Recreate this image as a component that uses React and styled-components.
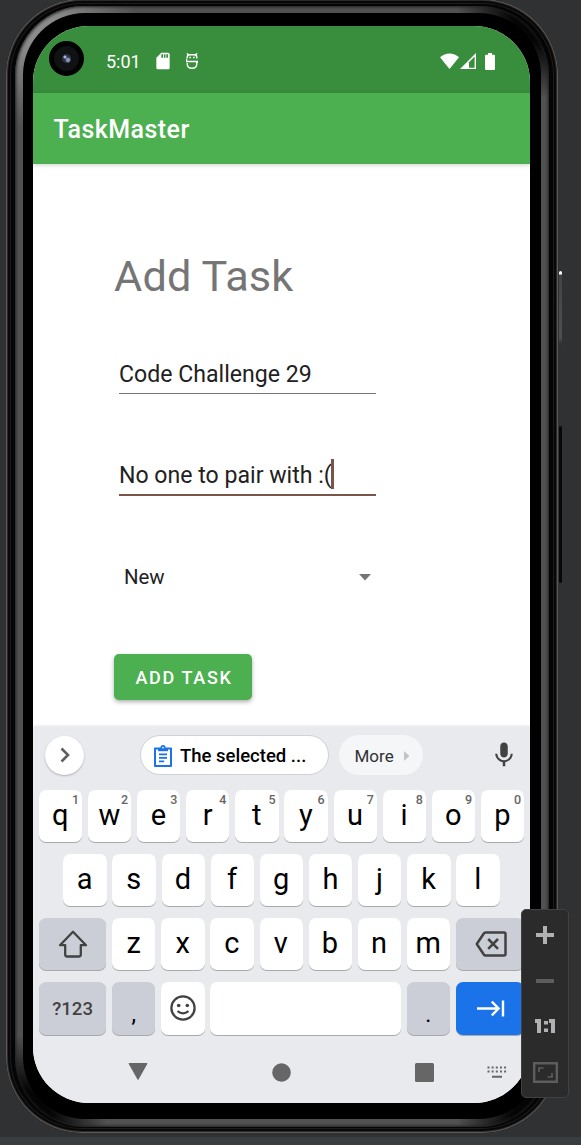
import React from 'react';
import styled, { createGlobalStyle } from 'styled-components';
import { MdSdCard, MdMic } from 'react-icons/md';

const GlobalStyle = createGlobalStyle`
  * { box-sizing: border-box; }
  body { margin: 0; background: #303133; overflow: hidden; font-family: Roboto, "Noto Sans", sans-serif; }
  button { font-family: inherit; border: 0; padding: 0; }
  svg { display: block; flex: none; }
`;

const Desktop = styled.div`
  position: relative;
  width: 581px;
  height: 1145px;
  overflow: hidden;
  padding-left: 6px;
  border-bottom: 8px solid #3a3d40;
  background: #303133;
`;

const Shell = styled.div`
  width: 552px;
  height: 1134px;
  margin-top: -1px;
  padding: 7px 9px 6px;
  border-radius: 76px;
  background: #050505;
  box-shadow: inset 0 0 0 1px #5b5855, inset 0 0 0 2px #2b2928, inset 0 0 0 4px #080808, inset 0 0 0 5px #1c1c1c;
`;

const Ring = styled.div`
  height: 1121px;
  padding: 7px 8px 8px;
  border-radius: 69px;
  background:
    radial-gradient(circle at 100% 0, #050505 38px, transparent 92px),
    radial-gradient(circle at 0 100%, #050505 38px, transparent 92px),
    radial-gradient(circle at 100% 100%, #050505 38px, transparent 92px),
    radial-gradient(circle at 0 0, #8b8b8b 40px, transparent 120px),
    #515151;
  box-shadow: inset 0 0 3px 1px #202020;
`;

const Bezel = styled.div`
  height: 1106px;
  padding: 13px 11px 16px 10px;
  border-radius: 62px;
  background: #000;
`;

const Screen = styled.div`
  height: 1077px;
  display: flex;
  flex-direction: column;
  overflow: hidden;
  border-radius: 56px;
  background: #fff;
`;

const StatusBar = styled.div`
  height: 67px;
  display: flex;
  align-items: center;
  padding: 3px 35px 0 16px;
  background: #388e3c;
  color: #fff;
`;

const Camera = styled.div`
  width: 35px;
  height: 35px;
  margin-top: -6px;
  border: 5px solid #000;
  border-radius: 50%;
  background: radial-gradient(circle at 11px 11px, #aab4d8 0 1px, transparent 2px),
    radial-gradient(circle at 14px 14px, #8793bd 0 1.5px, transparent 3px),
    radial-gradient(circle at 50% 50%, #293142 0 4px, #101112 5px);
`;

const Clock = styled.span`
  width: 51px;
  margin: 0 0 0 22px;
  font-size: 18px;
`;

const StatusGroup = styled.div`
  display: flex;
  align-items: center;
  gap: ${({ $gap }) => $gap}px;
  margin-left: ${({ $push }) => ($push ? 'auto' : '-4px')};
`;

const AppBar = styled.header`
  position: relative;
  height: 71px;
  display: flex;
  align-items: center;
  padding: 2px 20.5px 0;
  background: #4caf50;
  box-shadow: 0 1px 4px rgba(0, 0, 0, 0.2);
  color: #fff;
  font-size: 25px;
  font-weight: 500;
  letter-spacing: 0.45px;
`;

const Form = styled.main`
  height: 563px;
  display: flex;
  flex-direction: column;
  align-items: flex-start;
  padding: 87px 0 0 81px;
`;

const Title = styled.h1`
  height: 52px;
  margin: 0;
  color: #757575;
  font-size: 43.3px;
  font-weight: 400;
  line-height: 52px;
  letter-spacing: 0.15px;
`;

const Field = styled.div`
  width: 257px;
  height: 40px;
  display: flex;
  align-items: center;
  margin: ${({ $top }) => $top}px 0 0 5px;
  padding-top: ${({ $focused }) => ($focused ? 0 : 1)}px;
  border-bottom: ${({ $focused }) => ($focused ? '2px solid #795548' : '1px solid #777')};
  color: #212121;
  font-size: 23.1px;
  white-space: nowrap;
`;

const Caret = styled.span`
  width: 2.5px;
  height: 30px;
  margin: -3px 0 0 -0.5px;
  background: #795548;
`;

const Select = styled.div`
  width: 247px;
  height: 30px;
  margin: 66px 0 0 10px;
  display: flex;
  align-items: center;
  justify-content: space-between;
  color: #212121;
  font-size: 20.4px;
`;

const SubmitButton = styled.button`
  width: 138px;
  height: 46px;
  margin-top: 62px;
  padding: 1px 0 0 2px;
  border-radius: 5px;
  background: #4caf50;
  box-shadow: 0 2px 4px rgba(0, 0, 0, 0.32);
  color: #fff;
  font-size: 18px;
  font-weight: 500;
  letter-spacing: 1.65px;
  white-space: nowrap;
`;

const Keyboard = styled.section`
  height: 376px;
  background: #e8eaed;
  box-shadow: 0 -1px 3px rgba(0, 0, 0, 0.12);
`;

const Suggestions = styled.div`
  height: 63px;
  display: flex;
  align-items: center;
  padding: 0 14px 7px 12px;
`;

const Expand = styled.button`
  width: 39px;
  height: 39px;
  display: flex;
  align-items: center;
  justify-content: center;
  padding-left: 1px;
  border-radius: 50%;
  background: #fff;
  box-shadow: 0 1px 2px rgba(0, 0, 0, 0.25);
`;

const ClipChip = styled.button`
  width: 189px;
  height: 40px;
  display: flex;
  align-items: center;
  gap: 8.5px;
  margin-left: 56px;
  padding: 1px 0 0 12.5px;
  border: 1px solid #d0d1d5;
  border-radius: 20px;
  background: #fff;
  color: #000;
  font-size: 18.5px;
  font-weight: 500;
  white-space: nowrap;
`;

const MoreChip = styled.button`
  width: 84px;
  height: 40px;
  display: flex;
  align-items: center;
  gap: 10px;
  margin: 0 auto 0 10px;
  padding: 1px 0 0 15.5px;
  border-radius: 20px;
  background: #f5f6f8;
  color: #303134;
  font-size: 17px;
`;

const Microphone = styled(MdMic)`
  margin-right: -3px;
`;

const Keys = styled.div`
  display: flex;
  flex-direction: column;
  gap: 12.3px;
  padding: 0 5.8px;
`;

const KeyRow = styled.div`
  height: ${({ $tall }) => ($tall ? 53 : 51.7)}px;
  display: flex;
  gap: 5.9px;
  padding: 0 ${({ $inset }) => $inset || 0}px;
`;

const LABEL_SIZE = { letter: 29, symbol: 18.6, mark: 23, icon: 16 };
const LABEL_PADDING = { letter: '0 0.5px 1px 0', symbol: '1px 0 0', mark: '12px 0 0', icon: '0 0 0 1px' };

const Key = styled.button`
  position: relative;
  flex: ${({ $width }) => ($width ? `0 0 ${$width}px` : '1 1 0')};
  display: flex;
  align-items: center;
  justify-content: center;
  padding: ${({ $kind = 'letter' }) => LABEL_PADDING[$kind]};
  border-radius: 7px;
  background: ${({ $tone }) => ({ dark: '#cbced6', blue: '#1a73e8' }[$tone] || '#fff')};
  box-shadow: 0 1px 0 rgba(0, 0, 0, 0.28);
  color: ${({ $kind }) => ($kind === 'symbol' ? '#424242' : '#000')};
  font-size: ${({ $kind = 'letter' }) => LABEL_SIZE[$kind]}px;
  font-weight: ${({ $kind }) => ($kind === 'symbol' ? 500 : 400)};
`;

const Hint = styled.span`
  position: absolute;
  top: 3px;
  right: 3px;
  color: #666;
  font-size: 12.5px;
  font-weight: 500;
  line-height: 14px;
`;

const NavBar = styled.nav`
  display: flex;
  align-items: center;
  padding: 28px 24px 0 95px;
`;

const NavGap = styled.span`
  flex: 0 0 ${({ $size }) => $size}px;
`;

const ZoomPanel = styled.aside`
  position: absolute;
  left: 521px;
  top: 909px;
  width: 48px;
  height: 189px;
  display: flex;
  flex-direction: column;
  align-items: center;
  padding-top: 16px;
  border: 1px solid #404142;
  border-radius: 5px;
  background: #2b2b2b;
`;

const ZoomItem = styled.div`
  flex: none;
  height: ${({ $h }) => $h}px;
  display: flex;
  align-items: center;
  justify-content: center;
`;

const SideButton = styled.div`
  position: absolute;
  left: 559px;
  top: ${({ $top }) => $top}px;
  width: 3px;
  height: ${({ $h }) => $h}px;
  border-radius: 2px;
  background: ${({ $power }) => ($power ? 'linear-gradient(#fff 0 3px, #444 4px, #505050 90%, #292929)' : '#080808')};
`;

const BugIcon = () => (
  <svg width="12" height="16" viewBox="0 0 12 16" fill="none" stroke="#fff" strokeWidth="1.4">
    <path d="M1.2 5.6V4.2Q1.2 1.7 4 1.7h4q2.8 0 2.8 2.5v1.4M1 .2l1.6 1.9M11 .2 9.4 2.1" />
    <path d="M.4 5.7v2.8h10.8M11.5 7.8v2.3M1.3 10v1.2c0 2.5 2 4 4.7 4s4.7-1.5 4.7-4V8.6" strokeWidth="1.5" />
    <path d="M3.3 4.6h1.6M7.1 4.6h1.6" strokeWidth="1.5" />
  </svg>
);

const WifiIcon = () => (
  <svg width="19" height="16" viewBox="0 0 19 16" fill="#fff"><path d="M0 4.2C5.3-.9 13.7-.9 19 4.2L9.5 16Z" /></svg>
);

const SignalIcon = () => (
  <svg width="16" height="16" viewBox="0 0 16 16">
    <path d="M0 16 16 0v16H0Z" fill="#fff" />
    <path d="M9 9.2 14.6 3.5v11.2H9Z" fill="#388e3c" />
  </svg>
);

const BatteryIcon = () => (
  <svg width="10" height="17" viewBox="0 0 10 17" fill="#fff"><path d="M3 0h4v1.8h2q1 0 1 1V16q0 1-1 1H1q-1 0-1-1V2.8q0-1 1-1h2Z" /></svg>
);

const ClipboardIcon = () => (
  <svg width="18" height="22" viewBox="0 0 18 22" fill="none" stroke="#1a73e8" strokeWidth="2">
    <path d="M1 3.5h16V21H1Z" strokeLinejoin="round" />
    <path d="M4 3h10v3.2H4Z" fill="#1a73e8" stroke="none" />
    <circle cx="9" cy="2.6" r="1.7" fill="#fff" strokeWidth="1.7" />
    <path d="M5 9.3h8M5 12.8h8M5 16.4h5.2" strokeWidth="1.7" />
  </svg>
);

const ShiftIcon = () => (
  <svg width="30" height="28" viewBox="0 0 30 28" fill="none" stroke="#424242" strokeWidth="2.3" strokeLinejoin="round">
    <path d="M15 1.8 28 15.2h-5.2v9.3q0 2-2 2H9.2q-2 0-2-2v-9.3H2Z" />
  </svg>
);

const BackspaceIcon = () => (
  <svg width="32" height="26" viewBox="0 0 32 26" fill="none" stroke="#424242" strokeWidth="2.5" strokeLinejoin="round">
    <path d="M10.5 1.5H29q1.5 0 1.5 1.5v20q0 1.5-1.5 1.5H10.5q-1 0-1.7-1L1.8 13l7-10.5q.7-1 1.7-1Z" />
    <path d="m13.2 8 9.8 9.8M23 8l-9.8 9.8" />
  </svg>
);

const SmileIcon = () => (
  <svg width="26" height="26" viewBox="0 0 26 26" fill="none" stroke="#424242" strokeWidth="2.3">
    <circle cx="13" cy="13" r="11.6" />
    <path d="M7.5 16.2q5.5 4.3 11 0" />
    <circle cx="8.7" cy="10.5" r="1.8" fill="#424242" stroke="none" />
    <circle cx="17.3" cy="10.5" r="1.8" fill="#424242" stroke="none" />
  </svg>
);

const TabIcon = () => (
  <svg width="28" height="17" viewBox="0 0 28 17" fill="none" stroke="#fff" strokeWidth="2.4">
    <path d="M0 8.5h21M14.8 1.7l6.8 6.8-6.8 6.8M26 .5v16" />
  </svg>
);

const KeyboardIcon = () => (
  <svg width="20" height="12" viewBox="0 0 20 12" stroke="#666" strokeWidth="2">
    <path d="M.5 1.5h19M.5 5.5h19" strokeDasharray="2 2.15" />
    <path d="M5 10.7h10" />
  </svg>
);

const TOP_ROW = 'qwertyuiop';

export default function App() {
  return (
    <Desktop>
      <GlobalStyle />
      <Shell>
        <Ring>
          <Bezel>
            <Screen>
              <StatusBar>
                <Camera />
                <Clock>5:01</Clock>
                <StatusGroup $gap={12.5}>
                  <MdSdCard size={20} />
                  <BugIcon />
                </StatusGroup>
                <StatusGroup $gap={1.5} $push>
                  <WifiIcon />
                  <SignalIcon />
                  <NavGap $size={6} />
                  <BatteryIcon />
                </StatusGroup>
              </StatusBar>
              <AppBar>TaskMaster</AppBar>
              <Form>
                <Title>Add Task</Title>
                <Field $top={51}>Code Challenge 29</Field>
                <Field $top={62} $focused>No one to pair with :(<Caret /></Field>
                <Select>
                  New
                  <svg width="12" height="7" viewBox="0 0 12 7"><path d="M0 0h12L6 6.5Z" fill="#757575" /></svg>
                </Select>
                <SubmitButton>ADD TASK</SubmitButton>
              </Form>
              <Keyboard>
                <Suggestions>
                  <Expand>
                    <svg width="10" height="16" viewBox="0 0 10 16" fill="none" stroke="#5f5f5f" strokeWidth="2.6"><path d="m1.5 1.5 6.5 6.5-6.5 6.5" /></svg>
                  </Expand>
                  <ClipChip><ClipboardIcon />The selected ...</ClipChip>
                  <MoreChip>
                    More
                    <svg width="6" height="10" viewBox="0 0 6 10"><path d="M0 0v10l5.3-5Z" fill="#c2c3c5" /></svg>
                  </MoreChip>
                  <Microphone size={30} color="#424242" width={24} />
                </Suggestions>
                <Keys>
                  <KeyRow>
                    {[...TOP_ROW].map((letter, i) => (
                      <Key key={letter}>{letter}<Hint>{(i + 1) % 10}</Hint></Key>
                    ))}
                  </KeyRow>
                  <KeyRow $inset={24.5}>
                    {[...'asdfghjkl'].map((letter) => <Key key={letter}>{letter}</Key>)}
                  </KeyRow>
                  <KeyRow>
                    <Key $width={67.6} $tone="dark" $kind="icon"><ShiftIcon /></Key>
                    {[...'zxcvbnm'].map((letter) => <Key key={letter}>{letter}</Key>)}
                    <Key $width={68.4} $tone="dark" $kind="icon"><BackspaceIcon /></Key>
                  </KeyRow>
                  <KeyRow $tall>
                    <Key $width={67.6} $tone="dark" $kind="symbol">?123</Key>
                    <Key $width={43.2} $tone="dark" $kind="mark">,</Key>
                    <Key $width={43.2} $kind="icon"><SmileIcon /></Key>
                    <Key aria-label="space" />
                    <Key $width={43.2} $tone="dark" $kind="mark">.</Key>
                    <Key $width={68.4} $tone="blue" $kind="icon"><TabIcon /></Key>
                  </KeyRow>
                </Keys>
                <NavBar>
                  <svg width="20" height="18" viewBox="0 0 20 18"><path d="M1 .5h18L10 16.5Z" fill="#666" stroke="#666" strokeLinejoin="round" /></svg>
                  <NavGap $size={124} />
                  <svg width="19" height="19"><circle cx="9.5" cy="9.5" r="9.3" fill="#666" /></svg>
                  <NavGap $size={124} />
                  <svg width="19" height="19"><rect width="19" height="19" rx="1.5" fill="#666" /></svg>
                  <NavGap $size={52.5} />
                  <KeyboardIcon />
                </NavBar>
              </Keyboard>
            </Screen>
          </Bezel>
        </Ring>
      </Shell>
      <SideButton $top={271} $h={74} $power />
      <SideButton $top={426} $h={157} />
      <ZoomPanel>
        <ZoomItem $h={18}><svg width="18" height="18"><path d="M9 0v18M0 9h18" stroke="#afb1b3" strokeWidth="4" /></svg></ZoomItem>
        <ZoomItem $h={74}><svg width="18" height="4"><path d="M0 2h18" stroke="#5c5d5f" strokeWidth="4" /></svg></ZoomItem>
        <ZoomItem $h={16}>
          <svg width="20" height="14" viewBox="0 0 20 14" fill="none" stroke="#afb1b3" strokeWidth="4">
            <path d="M0 2h4v12M14 2h4v12M11 2v3.6M11 9.5v3.6" />
          </svg>
        </ZoomItem>
        <ZoomItem $h={76}>
          <svg width="25" height="21" viewBox="0 0 25 21" fill="none" stroke="#5c5d5f">
            <path d="M1.2 1.2h22.6v18.6H1.2Z" strokeWidth="2.4" />
            <path d="M6 10V6h4.5M14.5 15H19v-4" strokeWidth="1.7" />
          </svg>
        </ZoomItem>
      </ZoomPanel>
    </Desktop>
  );
}
